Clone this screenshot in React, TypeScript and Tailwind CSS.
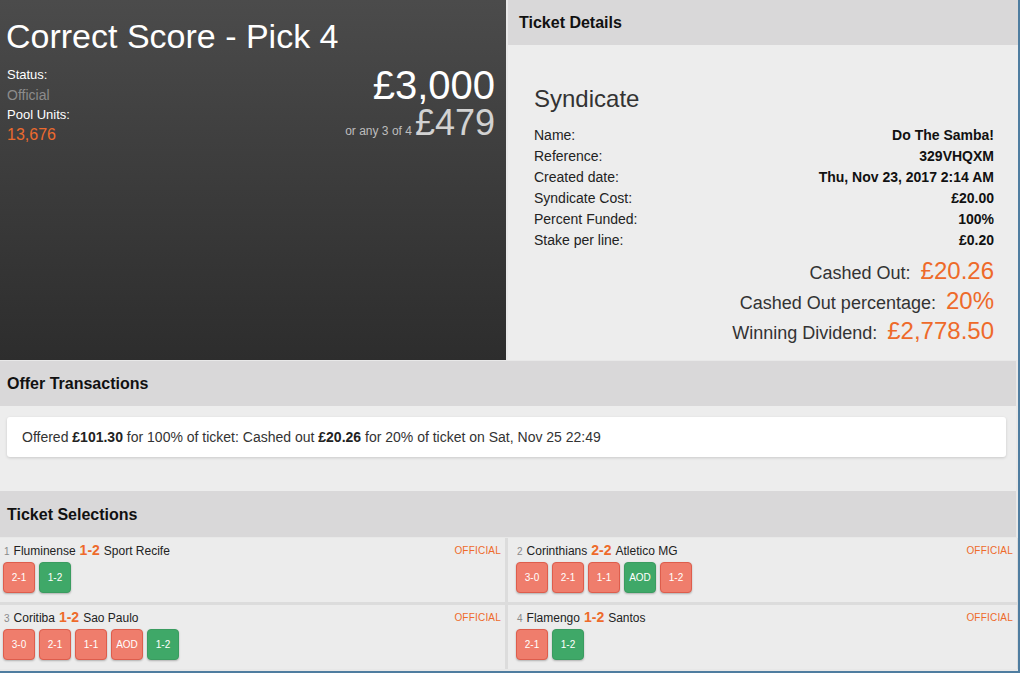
import React from "react";

const ORANGE = "text-[#ee6a2a]";

type Sel = { n: number; home: string; score: string; away: string; picks: { t: string; win?: boolean }[] };

const sels: Sel[] = [
  { n: 1, home: "Fluminense", score: "1-2", away: "Sport Recife", picks: [{ t: "2-1" }, { t: "1-2", win: true }] },
  { n: 2, home: "Corinthians", score: "2-2", away: "Atletico MG", picks: [{ t: "3-0" }, { t: "2-1" }, { t: "1-1" }, { t: "AOD", win: true }, { t: "1-2" }] },
  { n: 3, home: "Coritiba", score: "1-2", away: "Sao Paulo", picks: [{ t: "3-0" }, { t: "2-1" }, { t: "1-1" }, { t: "AOD" }, { t: "1-2", win: true }] },
  { n: 4, home: "Flamengo", score: "1-2", away: "Santos", picks: [{ t: "2-1" }, { t: "1-2", win: true }] },
];

function Cell({ s, right }: { s: Sel; right: boolean }) {
  return (
    <div className={`bg-[#ececec] h-[64px] pr-[4px] pt-[4px] ${right ? "pl-[8px]" : "pl-[3px]"}`}>
      <div className="flex items-center justify-between h-[16px]">
        <div className="flex items-baseline whitespace-nowrap">
          <span className="text-[10px] text-[#8a8a8a] ml-[1px] mr-[4px]">{s.n}</span>
          <span className="text-[12px] text-[#222]">{s.home}</span>
          <span className={`text-[14px] font-bold ${ORANGE} mx-[4px]`}>{s.score}</span>
          <span className="text-[12px] text-[#222]">{s.away}</span>
        </div>
        <span className={`text-[10px] ${ORANGE} tracking-[0.2px]`}>OFFICIAL</span>
      </div>
      <div className="flex gap-[4px] mt-[4px]">
        {s.picks.map((p, i) => (
          <div
            key={i}
            className={`w-[32px] h-[31px] rounded-[4px] border flex items-center justify-center text-white text-[10px] shadow-[0_1px_2px_rgba(0,0,0,0.25)] ${
              p.win ? "bg-[#3fa868] border-[#3a9c60]" : "bg-[#ef7d6c] border-[#de5d4c]"
            }`}
          >
            {p.t}
          </div>
        ))}
      </div>
    </div>
  );
}

export default function App() {
  const rows: [string, string][] = [
    ["Name:", "Do The Samba!"],
    ["Reference:", "329VHQXM"],
    ["Created date:", "Thu, Nov 23, 2017 2:14 AM"],
    ["Syndicate Cost:", "£20.00"],
    ["Percent Funded:", "100%"],
    ["Stake per line:", "£0.20"],
  ];
  return (
    <div className="bg-white min-h-screen" style={{ fontFamily: '"Liberation Sans", Arial, sans-serif' }}>
      <div className="w-[1020px] h-[673px] border-r-2 border-b-2 border-[#4f7da0] bg-[#e8e8e8] pb-[2px] flex flex-col">
        {/* Top */}
        <div className="flex h-[360px] gap-[2px]">
          <div className="w-[506px] bg-gradient-to-b from-[#4b4b4b] to-[#2d2d2d] pl-[7px] pr-[11px] pt-[16px]">
            <div className="text-white text-[34px] leading-[40px] whitespace-nowrap -ml-[1px]">Correct Score - Pick 4</div>
            <div className="flex justify-between mt-[9px]">
              <div className="text-[13px] leading-[20px]">
                <div className="text-white">Status:</div>
                <div className="text-[#8c8c8c] text-[14px]">Official</div>
                <div className="text-white">Pool Units:</div>
                <div className="text-[#ec6a2e] text-[16px]">13,676</div>
              </div>
              <div className="flex flex-col items-end">
                <div className="text-white text-[40px] leading-[40px]">£3,000</div>
                <div className="flex items-baseline">
                  <span className="text-[#bdbdbd] text-[12px] mr-[3px]">or any 3 of 4</span>
                  <span className="text-[#d2d2d2] text-[36px] leading-[36px]">£479</span>
                </div>
              </div>
            </div>
          </div>
          <div className="flex-1 flex flex-col bg-[#ededed]">
            <div className="h-[45px] bg-[#d9d8d9] px-[11px] flex items-center text-[16px] font-bold text-[#111]">Ticket Details</div>
            <div className="pl-[26px] pr-[24px] pt-[40px]">
              <div className="text-[24px] leading-[28px] text-[#333]">Syndicate</div>
              <div className="mt-[12px] text-[14px] leading-[21px]">
                {rows.map(([k, v]) => (
                  <div key={k} className="flex justify-between">
                    <span className="text-[#222]">{k}</span>
                    <span className="font-bold text-[#111]">{v}</span>
                  </div>
                ))}
              </div>
              <div className="mt-[2px] flex flex-col items-end">
                {[
                  ["Cashed Out:", "£20.26"],
                  ["Cashed Out percentage:", "20%"],
                  ["Winning Dividend:", "£2,778.50"],
                ].map(([k, v]) => (
                  <div key={k} className="flex items-baseline h-[30px]">
                    <span className="text-[18px] text-[#333]">{k}</span>
                    <span className={`text-[24px] ${ORANGE} ml-[10px]`}>{v}</span>
                  </div>
                ))}
              </div>
            </div>
          </div>
        </div>

        {/* Offer transactions */}
        <div className="mt-[1px] h-[45px] bg-[#d9d8d9] px-[7px] flex items-center text-[16px] font-bold text-[#111] mr-[2px]">
          Offer Transactions
        </div>
        <div className="h-[85px] bg-[#ededed] pt-[11px] mr-[2px]">
          <div className="ml-[7px] mr-[10px] h-[40px] bg-white rounded-[3px] shadow-[0_1px_3px_rgba(0,0,0,0.15)] px-[15px] flex items-center text-[14px] text-[#333]">
            <span>
              Offered <b className="text-[#222]">£101.30</b> for 100% of ticket: Cashed out <b className="text-[#222]">£20.26</b> for 20% of ticket on Sat, Nov 25 22:49
            </span>
          </div>
        </div>

        {/* Ticket selections */}
        <div className="h-[46px] bg-[#d9d8d9] px-[7px] pt-[2px] flex items-center text-[16px] font-bold text-[#111] mr-[2px]">
          Ticket Selections
        </div>
        <div className="mt-[1px] grid grid-cols-[505px_509px] gap-x-[3px] gap-y-[3px] bg-[#dcdcdc]">
          {sels.map((s, i) => (
            <Cell key={s.n} s={s} right={i % 2 === 1} />
          ))}
        </div>
      </div>
    </div>
  );
}
